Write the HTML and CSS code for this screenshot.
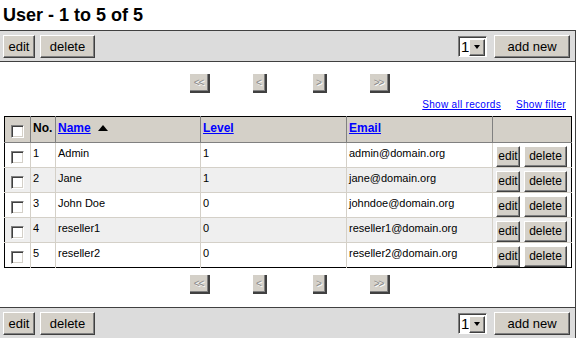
FILE: index.html
```html
<!DOCTYPE html>
<html>
<head>
<meta charset="utf-8">
<link rel="stylesheet" href="styles.css">
</head>
<body>
<h1 class="title">User - 1 to 5 of 5</h1>
<div class="toolbar">
  <div class="group">
    <button class="btn">edit</button>
    <button class="btn">delete</button>
  </div>
  <div class="group">
    <span class="select"><span class="sel-val">1</span><span class="sel-btn"><span class="arrow"></span></span></span>
    <button class="btn btn-add">add new</button>
  </div>
</div>
<div class="content">
  <div class="pager">
    <span class="pcell"><span class="pbtn wide">&lt;&lt;</span></span>
    <span class="pcell"><span class="pbtn">&lt;</span></span>
    <span class="pcell"><span class="pbtn">&gt;</span></span>
    <span class="pcell"><span class="pbtn wide">&gt;&gt;</span></span>
  </div>
  <div class="links">
    <a href="#">Show all records</a>
    <a href="#">Show filter</a>
  </div>
  <table class="grid">
    <thead>
      <tr>
        <th class="c-chk"><span class="chk"></span></th>
        <th class="c-no">No.</th>
        <th class="c-name"><a href="#">Name</a> <span class="sort"></span></th>
        <th class="c-level"><a href="#">Level</a></th>
        <th class="c-email"><a href="#">Email</a></th>
        <th class="c-act"></th>
      </tr>
    </thead>
    <tbody>
      <tr><td class="c-chk"><span class="chk"></span></td><td>1</td><td>Admin</td><td>1</td><td>admin@domain.org</td><td class="c-act"><button class="btn sm">edit</button><button class="btn sm del">delete</button></td></tr>
      <tr class="alt"><td class="c-chk"><span class="chk"></span></td><td>2</td><td>Jane</td><td>1</td><td>jane@domain.org</td><td class="c-act"><button class="btn sm">edit</button><button class="btn sm del">delete</button></td></tr>
      <tr><td class="c-chk"><span class="chk"></span></td><td>3</td><td>John Doe</td><td>0</td><td>johndoe@domain.org</td><td class="c-act"><button class="btn sm">edit</button><button class="btn sm del">delete</button></td></tr>
      <tr class="alt"><td class="c-chk"><span class="chk"></span></td><td>4</td><td>reseller1</td><td>0</td><td>reseller1@domain.org</td><td class="c-act"><button class="btn sm">edit</button><button class="btn sm del">delete</button></td></tr>
      <tr><td class="c-chk"><span class="chk"></span></td><td>5</td><td>reseller2</td><td>0</td><td>reseller2@domain.org</td><td class="c-act"><button class="btn sm">edit</button><button class="btn sm del">delete</button></td></tr>
    </tbody>
  </table>
  <div class="pager bottom">
    <span class="pcell"><span class="pbtn wide">&lt;&lt;</span></span>
    <span class="pcell"><span class="pbtn">&lt;</span></span>
    <span class="pcell"><span class="pbtn">&gt;</span></span>
    <span class="pcell"><span class="pbtn wide">&gt;&gt;</span></span>
  </div>
</div>
<div class="toolbar">
  <div class="group">
    <button class="btn">edit</button>
    <button class="btn">delete</button>
  </div>
  <div class="group">
    <span class="select"><span class="sel-val">1</span><span class="sel-btn"><span class="arrow"></span></span></span>
    <button class="btn btn-add">add new</button>
  </div>
</div>
</body>
</html>
```
FILE: styles.css
```css
* { box-sizing: border-box; }
body {
  margin: 0;
  width: 578px;
  font-family: "Liberation Sans", Arial, sans-serif;
  background: #fff;
  color: #000;
}
.title {
  margin: 0;
  height: 30px;
  padding: 5px 0 0 3px;
  font-size: 18px;
  line-height: 20px;
  font-weight: bold;
}
.toolbar {
  height: 32px;
  background: #dcdcdc;
  border-top: 1px solid #404040;
  border-bottom: 1px solid #404040;
  border-right: 1px solid #404040;
  width: 576px;
  display: flex;
  justify-content: space-between;
  align-items: center;
  padding: 0 5px 0 3px;
}
.group { display: flex; align-items: center; gap: 5px; }
.btn {
  font-family: "Liberation Sans", Arial, sans-serif;
  font-size: 13px;
  height: 23px;
  padding: 0 6px;
  background: #d4d0c8;
  color: #000;
  border: 1px solid;
  border-color: #fff #404040 #404040 #fff;
  box-shadow: inset -1px -1px 0 #808080;
  line-height: 19px;
  margin: 0;
  text-align: center;
}
.toolbar .btn:first-child { width: 32px; padding: 0; }
.toolbar .btn + .btn { width: 55px; padding: 0; }
.toolbar .btn-add { width: 76px; padding: 0; margin-left: 2px; }
.select {
  display: flex;
  width: 29px;
  height: 21px;
  border: 1px solid;
  border-color: #808080 #fff #fff #808080;
  box-shadow: inset 1px 1px 0 #404040;
  background: #fff;
  padding: 2px 1px 1px 2px;
}
.sel-val {
  flex: 1;
  font-size: 15px;
  line-height: 16px;
  padding-left: 0;
}
.sel-btn {
  width: 16px;
  height: 17px;
  background: #d4d0c8;
  border: 1px solid;
  border-color: #fff #404040 #404040 #fff;
  box-shadow: inset -1px -1px 0 #808080;
  display: flex;
  align-items: center;
  justify-content: center;
}
.arrow {
  width: 0; height: 0;
  border-left: 3.5px solid transparent;
  border-right: 3.5px solid transparent;
  border-top: 4px solid #000;
}
.content {
  width: 576px;
  border-right: 1px solid #404040;
  padding: 12px 0 13px 0;
}
.pager {
  display: flex;
  justify-content: center;
  padding-left: 4px;
  height: 19px;
}
.pager.bottom { margin-top: 7px; }
.pcell {
  width: 60px;
  display: flex;
  justify-content: center;
}
.pbtn {
  display: block;
  width: 14px;
  height: 19px;
  background: #d4d0c8;
  border-right: 2px solid #404040;
  border-bottom: 2px solid #404040;
  box-shadow: inset -1px -1px 0 #808080;
  color: #8a8a8a;
  text-shadow: 1px 1px 0 #fff;
  font-size: 10px;
  line-height: 17px;
  text-align: center;
  font-family: "Liberation Sans", Arial, sans-serif;
  letter-spacing: -1px;
}
.pbtn.wide { width: 20px; }
.links {
  display: flex;
  justify-content: flex-end;
  gap: 15px;
  padding: 6px 9px 0 0;
  height: 23px;
  font-size: 10px;
  line-height: 12px;
}
.links a {
  color: #0000ff;
  letter-spacing: 0.3px;
}
.grid {
  margin-left: 4px;
  width: 568px;
  border-collapse: collapse;
  border: 1px solid #000;
  font-size: 11px;
}
.grid th {
  background: #d4d0c8;
  height: 26px;
  text-align: left;
  font-size: 12px;
  font-weight: bold;
  padding: 0 2px 4px 2px;
  border-left: 1px solid #808080;
  border-bottom: 1px solid #808080;
}
.grid th a { color: #0000ff; }
.grid td {
  height: 25px;
  padding: 0 2px 4px 2px;
  border-left: 1px solid #d4d0c8;
  border-bottom: 1px solid #d4d0c8;
}
.grid tbody tr:last-child td { border-bottom: none; }
.grid tr.alt td { background: #efefef; }
.grid .c-chk { width: 26px; text-align: center; padding: 0; border-left: none; }
.grid .c-no { width: 25px; }
.grid .c-name { width: 145px; }
.grid .c-level { width: 146px; }
.grid .c-email { width: 146px; }
.grid td.c-act { padding: 0 0 0 3px; white-space: nowrap; }
.chk {
  display: inline-block;
  width: 13px;
  height: 13px;
  background: #fff;
  border: 1px solid;
  border-color: #808080 #fff #fff #808080;
  box-shadow: inset 1px 1px 0 #404040, inset -1px -1px 0 #d4d0c8;
  vertical-align: middle;
  margin-top: 4px;
}
.sort {
  display: inline-block;
  width: 0; height: 0;
  border-left: 5px solid transparent;
  border-right: 5px solid transparent;
  border-bottom: 6px solid #000;
  margin-left: 4px;
  vertical-align: 1px;
}
.btn.sm {
  font-size: 12px;
  height: 21px;
  width: 24px;
  line-height: 17px;
  padding: 0;
  margin-top: 2px;
}
.btn.sm.del { margin-left: 4px; width: 43px; }
```
